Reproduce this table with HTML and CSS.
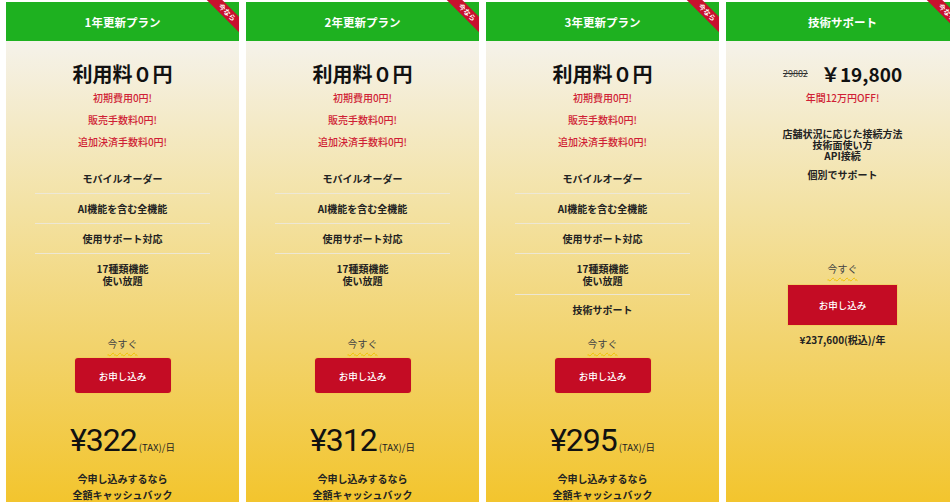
FILE: index.html
```html
<!DOCTYPE html>
<html lang="ja">
<head>
<meta charset="utf-8">
<title>料金プラン</title>
<link rel="stylesheet" href="styles.css">
</head>
<body>
<div class="plans">
  <section class="plan">
    <header class="plan-head">1年更新プラン<div class="ribbon-wrap"><span class="ribbon">今なら</span></div></header>
    <div class="plan-body">
      <div class="fee">利用料０円</div>
      <ul class="perks"><li>初期費用0円!</li><li>販売手数料0円!</li><li>追加決済手数料0円!</li></ul>
      <ul class="features">
        <li>モバイルオーダー</li>
        <li>AI機能を含む全機能</li>
        <li>使用サポート対応</li>
        <li class="tall">17種類機能<br>使い放題</li>
      </ul>
      <div class="cta"><span class="now">今すぐ</span><a class="apply">お申し込み</a></div>
      <div class="price"><span class="yen">¥322</span><span class="unit">(TAX)/日</span></div>
      <p class="cashback">今申し込みするなら<br>全額キャッシュバック</p>
    </div>
  </section>
  <section class="plan">
    <header class="plan-head">2年更新プラン<div class="ribbon-wrap"><span class="ribbon">今なら</span></div></header>
    <div class="plan-body">
      <div class="fee">利用料０円</div>
      <ul class="perks"><li>初期費用0円!</li><li>販売手数料0円!</li><li>追加決済手数料0円!</li></ul>
      <ul class="features">
        <li>モバイルオーダー</li>
        <li>AI機能を含む全機能</li>
        <li>使用サポート対応</li>
        <li class="tall">17種類機能<br>使い放題</li>
      </ul>
      <div class="cta"><span class="now">今すぐ</span><a class="apply">お申し込み</a></div>
      <div class="price"><span class="yen">¥312</span><span class="unit">(TAX)/日</span></div>
      <p class="cashback">今申し込みするなら<br>全額キャッシュバック</p>
    </div>
  </section>
  <section class="plan">
    <header class="plan-head">3年更新プラン<div class="ribbon-wrap"><span class="ribbon">今なら</span></div></header>
    <div class="plan-body">
      <div class="fee">利用料０円</div>
      <ul class="perks"><li>初期費用0円!</li><li>販売手数料0円!</li><li>追加決済手数料0円!</li></ul>
      <ul class="features">
        <li>モバイルオーダー</li>
        <li>AI機能を含む全機能</li>
        <li>使用サポート対応</li>
        <li class="tall">17種類機能<br>使い放題</li>
        <li>技術サポート</li>
      </ul>
      <div class="cta"><span class="now">今すぐ</span><a class="apply">お申し込み</a></div>
      <div class="price"><span class="yen">¥295</span><span class="unit">(TAX)/日</span></div>
      <p class="cashback">今申し込みするなら<br>全額キャッシュバック</p>
    </div>
  </section>
  <section class="plan">
    <header class="plan-head">技術サポート<div class="ribbon-wrap"><span class="ribbon">今なら</span></div></header>
    <div class="plan-body">
      <div class="fee support-fee"><s class="old">29802</s><span class="new">￥19,800</span></div>
      <ul class="perks"><li>年間12万円OFF!</li></ul>
      <p class="support-desc">店舗状況に応じた接続方法<br>技術面使い方<br>API接続</p>
      <p class="support-note">個別でサポート</p>
      <div class="cta support-cta"><span class="now">今すぐ</span><a class="apply square">お申し込み</a></div>
      <p class="year-price">¥237,600(税込)/年</p>
    </div>
  </section>
</div>
</body>
</html>
```
FILE: styles.css
```css
* { box-sizing: border-box; }
html, body { margin: 0; padding: 0; }
body {
  padding-top: 2px;
  background: #ffffff;
  font-family: "Noto Sans CJK JP", "Noto Sans", sans-serif;
  color: #222;
  overflow: hidden;
  width: 950px;
  height: 502px;
}
.plans {
  display: grid;
  grid-template-columns: repeat(4, 233px);
  column-gap: 7px;
  padding-left: 6px;
}
.plan {
  position: relative;
  display: flex;
  flex-direction: column;
}
.plan-head {
  position: relative;
  height: 39px;
  background: #1eb120;
  color: #fff;
  font-weight: 700;
  font-size: 11.5px;
  display: flex;
  align-items: center;
  justify-content: center;
}
.ribbon-wrap {
  position: absolute;
  top: -2px;
  right: 0;
  width: 40px;
  height: 42px;
  overflow: hidden;
}
.ribbon {
  position: absolute;
  left: -7.5px;
  top: 7px;
  width: 70px;
  height: 11px;
  background: #c8102e;
  color: #fff;
  font-size: 7px;
  font-weight: 700;
  line-height: 11px;
  text-align: center;
  transform: rotate(45deg);
}
.plan-body {
  height: 470px;
  background: linear-gradient(to bottom, #f5f2ea 0%, #f3e2a4 35%, #f2d36c 65%, #f3c42a 100%);
  display: flex;
  flex-direction: column;
  align-items: center;
  text-align: center;
  padding-top: 20px;
}
.fee {
  font-size: 20px;
  font-weight: 700;
  line-height: 26px;
  height: 26px;
  color: #111;
}
.perks {
  list-style: none;
  margin: 0;
  padding: 0;
}
.perks li {
  color: #d01f36;
  font-size: 10px;
  line-height: 22px;
  font-weight: 500;
}
.features {
  list-style: none;
  margin: 11px 0 0;
  padding: 0;
  width: 175px;
  height: 172px;
}
.features li {
  font-size: 10px;
  font-weight: 700;
  height: 30px;
  line-height: 29px;
  border-bottom: 1px solid rgba(236, 232, 220, 0.9);
}
.features li:last-child { border-bottom: none; }
.features li.tall {
  height: 41px;
  line-height: 12px;
  padding-top: 9px;
}
.cta {
  display: flex;
  flex-direction: column;
  align-items: center;
}
.now {
  font-size: 10px;
  line-height: 16px;
  color: #444;
  text-decoration: underline wavy #f0c000;
  text-decoration-thickness: 1px;
  text-underline-offset: 4px;
}
.apply {
  margin-top: 6px;
  width: 96px;
  height: 35px;
  background: #c40c24;
  color: #fff;
  font-size: 9.5px;
  font-weight: 500;
  display: flex;
  align-items: center;
  justify-content: center;
  border-radius: 3px;
  box-shadow: 0 0 0 1px rgba(240, 200, 80, 0.5);
}
.price {
  margin-top: 27px;
  height: 40px;
  display: flex;
  align-items: baseline;
  justify-content: center;
  line-height: 40px;
}
.yen {
  font-family: "Roboto", "Noto Sans CJK JP", sans-serif;
  font-size: 32px;
  letter-spacing: -1px;
  color: #111;
}
.unit {
  font-size: 9.5px;
  margin-left: 2px;
}
.cashback {
  margin: 11px 0 0;
  font-size: 10px;
  font-weight: 700;
  line-height: 16px;
}
.support-fee {
  display: flex;
  align-items: center;
  justify-content: center;
}
.old {
  font-size: 9px;
  font-weight: 400;
  color: #333;
  margin-right: 13px;
}
.new {
  font-size: 19px;
  font-weight: 700;
}
.support-desc {
  margin: 19px 0 0;
  font-size: 10px;
  font-weight: 700;
  line-height: 11px;
}
.support-note {
  margin: 7px 0 0;
  font-size: 10px;
  font-weight: 700;
  line-height: 14px;
}
.support-cta { margin-top: 79px; }
.support-cta .apply {
  margin-top: 8px;
  width: 109px;
  height: 40px;
  border-radius: 0;
}
.year-price {
  margin: 8px 0 0;
  font-size: 10px;
  font-weight: 700;
  line-height: 14px;
}
```
